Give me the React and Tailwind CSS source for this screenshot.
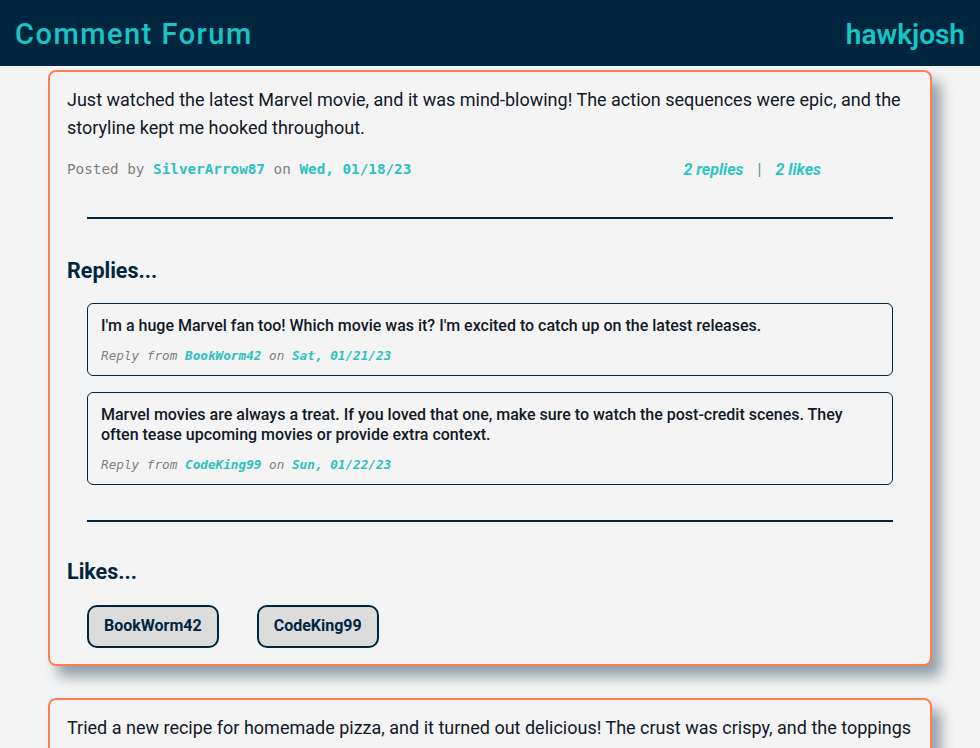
export default function App() {
  const mono = { fontFamily: '"DejaVu Sans Mono", "Liberation Mono", monospace' };
  const replies = [
    {
      text: "I'm a huge Marvel fan too! Which movie was it? I'm excited to catch up on the latest releases.",
      user: "BookWorm42",
      date: "Sat, 01/21/23",
    },
    {
      text: "Marvel movies are always a treat. If you loved that one, make sure to watch the post-credit scenes. They often tease upcoming movies or provide extra context.",
      user: "CodeKing99",
      date: "Sun, 01/22/23",
    },
  ];
  return (
    <div className="min-h-screen bg-[#f4f4f4] font-['Roboto',sans-serif] text-[#1a1a1a]">
      <header className="h-[66px] bg-[#00263f] flex items-center justify-between px-[15px] pt-[3px]">
        <h1 className="text-[29px] font-medium tracking-[1.5px] text-[#17c4c6]">Comment Forum</h1>
        <span className="text-[28px] font-semibold text-[#17c4c6]">hawkjosh</span>
      </header>
      <main className="flex flex-col gap-[32px] pt-[4px] px-12">
        <article className="border-2 border-[#ff7f50] rounded-lg bg-[#f4f4f4] shadow-[9px_11px_13px_rgba(0,38,63,0.4)] px-[17px] pt-[14px] pb-[16px]">
          <p className="text-[18px] leading-[28px] text-[#111827]">
            Just watched the latest Marvel movie, and it was mind-blowing! The action sequences were epic, and the storyline kept me hooked throughout.
          </p>
          <div className="flex items-center justify-between mt-[16px] pr-[92px]">
            <div className="text-[14.3px] text-[#808080]" style={mono}>
              Posted by <span className="font-bold text-[#2ec0c0]">SilverArrow87</span> on{" "}
              <span className="font-bold text-[#2ec0c0]">Wed, 01/18/23</span>
            </div>
            <div className="text-[16px] italic font-bold text-[#2ec4c4] flex items-center gap-[14px]">
              <span>2 replies</span>
              <span className="text-[#6b8a9a] not-italic font-normal">|</span>
              <span>2 likes</span>
            </div>
          </div>
          <hr className="mx-[20px] mt-[35px] border-0 border-t-2 border-[#00263f]" />
          <h2 className="mt-[36px] text-[21.5px] font-bold text-[#00263f]">Replies...</h2>
          <div className="mx-[20px] mt-[16px] flex flex-col gap-[16px]">
            {replies.map((r) => (
              <div key={r.user} className="border border-[#00263f] rounded-md px-[13px] pt-[12px] pb-[10px]">
                <p className="text-[16px] leading-[20px] font-medium text-[#111827]">{r.text}</p>
                <div className="mt-[10px] text-[12.7px] italic text-[#808080]" style={mono}>
                  Reply from <span className="font-bold text-[#2ec0c0]">{r.user}</span> on{" "}
                  <span className="font-bold text-[#2ec0c0]">{r.date}</span>
                </div>
              </div>
            ))}
          </div>
          <hr className="mx-[20px] mt-[35px] border-0 border-t-2 border-[#00263f]" />
          <h2 className="mt-[34px] text-[21.5px] font-bold text-[#00263f]">Likes...</h2>
          <div className="mx-[20px] mt-[16px] flex gap-[38px]">
            {["BookWorm42", "CodeKing99"].map((n) => (
              <span key={n} className="h-[43px] px-[15px] flex items-center border-2 border-[#00263f] rounded-[10px] bg-[#dcdcdc] text-[16px] font-bold text-[#00263f]">
                {n}
              </span>
            ))}
          </div>
        </article>
        <article className="border-2 border-[#ff7f50] rounded-lg bg-[#f4f4f4] shadow-[9px_11px_13px_rgba(0,38,63,0.4)] px-[17px] pt-[14px] pb-[16px]">
          <p className="text-[18px] leading-[28px] text-[#111827]">
            Tried a new recipe for homemade pizza, and it turned out delicious! The crust was crispy, and the toppings were perfectly balanced. Definitely making it again soon.
          </p>
        </article>
      </main>
    </div>
  );
}
